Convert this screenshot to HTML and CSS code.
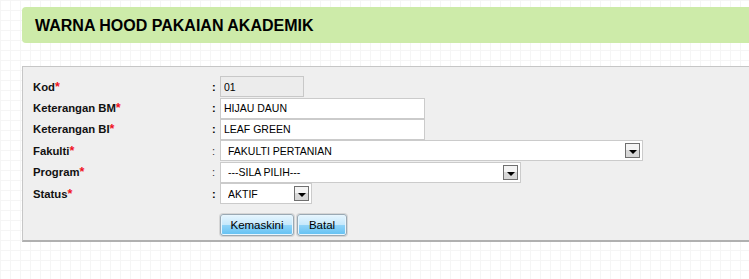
FILE: index.html
```html
<!DOCTYPE html>
<html lang="ms">
<head>
  <meta charset="UTF-8" />
  <title>Warna Hood Pakaian Akademik</title>
  <link rel="stylesheet" href="styles.css">
</head>
<body>

<div class="page">
  <div class="title-bar">
    <h1>WARNA HOOD PAKAIAN AKADEMIK</h1>
  </div>

  <div class="form-panel">
    <div class="form-grid">
      <label class="label">Kod<span class="req">*</span></label>
      <span class="colon">:</span>
      <div><input class="field readonly w-kod" type="text" value="01" readonly /></div>

      <label class="label">Keterangan BM<span class="req">*</span></label>
      <span class="colon">:</span>
      <div><input class="field w-text" type="text" value="HIJAU DAUN" /></div>

      <label class="label">Keterangan BI<span class="req">*</span></label>
      <span class="colon">:</span>
      <div><input class="field w-text" type="text" value="LEAF GREEN" /></div>

      <label class="label">Fakulti<span class="req">*</span></label>
      <span class="colon thin">:</span>
      <div class="select w-fakulti">
        <select class="field">
          <option>FAKULTI PERTANIAN</option>
        </select>
        <span class="arrow"></span>
      </div>

      <label class="label">Program<span class="req">*</span></label>
      <span class="colon thin">:</span>
      <div class="select w-program">
        <select class="field">
          <option>---SILA PILIH---</option>
        </select>
        <span class="arrow"></span>
      </div>

      <label class="label">Status<span class="req">*</span></label>
      <span class="colon">:</span>
      <div class="select w-status">
        <select class="field">
          <option>AKTIF</option>
        </select>
        <span class="arrow"></span>
      </div>
    </div>

    <div class="actions">
      <button class="btn btn-save">Kemaskini</button>
      <button class="btn btn-cancel">Batal</button>
    </div>
  </div>
</div>

</body>
</html>
```

FILE: styles.css
```css
html, body {
  margin: 0;
  padding: 0;
  font-family: 'Liberation Sans', Arial, sans-serif;
  color: #000;
  background-color: #fff;
  background-image:
    linear-gradient(#f5f5f5 1px, transparent 1px),
    linear-gradient(90deg, #f5f5f5 1px, transparent 1px);
  background-size: 10px 10px;
  overflow: hidden;
}

.page {
  padding: 7px 0 0 22px;
}

.title-bar {
  height: 36px;
  background: #cdeba9;
  border-radius: 4px 0 0 4px;
  display: flex;
  align-items: center;
  padding-left: 13px;
}

.title-bar h1 {
  margin: 0;
  font-size: 16px;
  font-weight: bold;
  padding-top: 1px;
}

.form-panel {
  margin-top: 23px;
  background: #efefef;
  border: 1px solid #c6c6c6;
  border-right: none;
  border-bottom: 2px solid #b0b0b0;
  padding: 9px 0 4px 10px;
}

.form-grid {
  display: grid;
  grid-template-columns: 178px 9px auto;
  grid-auto-rows: 21.4px;
  align-items: center;
}

.label {
  font-size: 11.3px;
  font-weight: bold;
  color: #111;
}

.req {
  color: #f0141e;
  font-size: 12.5px;
}

.colon {
  font-size: 11px;
  font-weight: bold;
  padding-left: 1px;
}

.colon.thin {
  font-weight: normal;
  color: #333;
}

.field {
  box-sizing: border-box;
  height: 21px;
  margin: 0;
  border: 1px solid #cbcbcb;
  background: #fff;
  font-family: 'Liberation Sans', Arial, sans-serif;
  font-size: 10.5px;
  color: #000;
  padding: 0 0 0 3px;
  outline: none;
  border-radius: 0;
}

.readonly {
  background: #ececec;
  border-color: #c8c8c8;
}

.w-kod { width: 84px; }
.w-text { width: 205px; }
.w-fakulti { width: 423px; }
.w-program { width: 301px; }
.w-status { width: 92px; }

.select {
  position: relative;
  height: 21px;
}

.select select {
  width: 100%;
  -webkit-appearance: none;
  appearance: none;
  padding-left: 7px;
}

.select .arrow {
  position: absolute;
  right: 3px;
  top: 3px;
  width: 13px;
  height: 13px;
  border: 1px solid #6f6f6f;
  background: linear-gradient(#f4f4f4, #f4f4f4 45%, #d9d9d9 46%, #d6d6d6);
  pointer-events: none;
}

.select .arrow::after {
  content: "";
  position: absolute;
  left: 3px;
  top: 6px;
  border-left: 4px solid transparent;
  border-right: 4px solid transparent;
  border-top: 4px solid #000;
}

.actions {
  display: flex;
  gap: 3px;
  margin: 10px 0 0 187px;
}

.btn {
  box-sizing: border-box;
  height: 22px;
  margin: 0;
  padding: 0;
  font-family: 'Liberation Sans', Arial, sans-serif;
  font-size: 11.5px;
  color: #000;
  border: 1px solid #9aa9b4;
  border-radius: 3px;
  box-shadow: 0 0 0 1px #d6d6d6, inset 0 0 0 1px #e8f6fe;
  background: linear-gradient(#e6f5fe, #c6e9fc 48%, #8fd3f8 52%, #62c1f3);
  cursor: pointer;
}

.btn-save { width: 74px; }
.btn-cancel { width: 50px; }
```
